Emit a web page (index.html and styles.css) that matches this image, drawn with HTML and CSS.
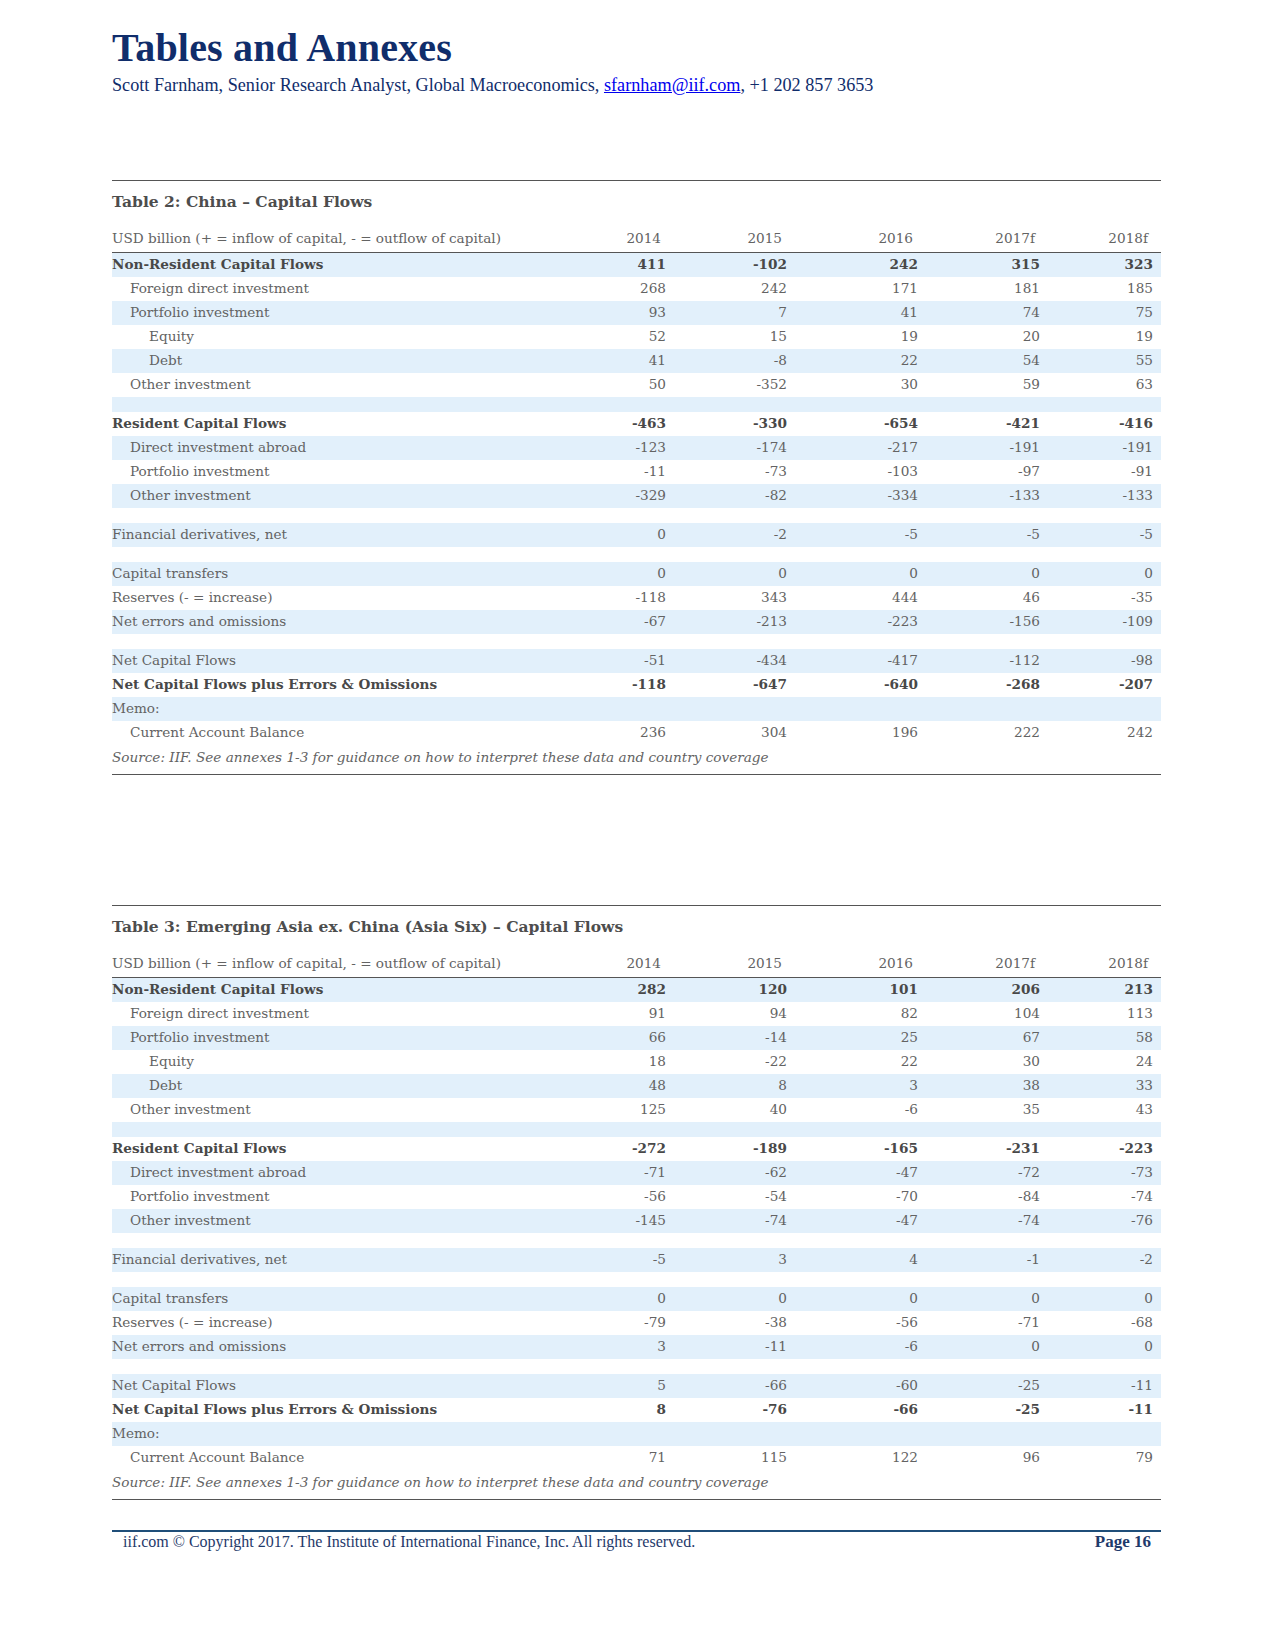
FILE: index.html
```html
<!DOCTYPE html>
<html lang="en">
<head>
<meta charset="utf-8">
<title>Tables and Annexes</title>
<link rel="stylesheet" href="styles.css">
</head>
<body>
<div class="page">
  <header class="page-head">
    <h1 class="page-title">Tables and Annexes</h1>
    <p class="byline">Scott Farnham, Senior Research Analyst, Global Macroeconomics, <a class="mail" href="mailto:sfarnham@iif.com">sfarnham@iif.com</a>, +1 202 857 3653</p>
  </header>

  <section class="block block-first">
    <h2 class="block-title">Table 2: China – Capital Flows</h2>
    <table class="data">
      <colgroup><col class="c-label"><col class="c1"><col class="c2"><col class="c3"><col class="c4"><col class="c5"><col class="c-pad"></colgroup>
      <thead>
        <tr class="head"><th class="lab">USD billion (+ = inflow of capital, - = outflow of capital)</th><th>2014</th><th>2015</th><th>2016</th><th>2017f</th><th>2018f</th><th></th></tr>
      </thead>
      <tbody>
        <tr class="b strong"><td>Non-Resident Capital Flows</td><td>411</td><td>-102</td><td>242</td><td>315</td><td>323</td><td></td></tr>
        <tr class="w"><td class="i1">Foreign direct investment</td><td>268</td><td>242</td><td>171</td><td>181</td><td>185</td><td></td></tr>
        <tr class="b"><td class="i1">Portfolio investment</td><td>93</td><td>7</td><td>41</td><td>74</td><td>75</td><td></td></tr>
        <tr class="w"><td class="i2">Equity</td><td>52</td><td>15</td><td>19</td><td>20</td><td>19</td><td></td></tr>
        <tr class="b"><td class="i2">Debt</td><td>41</td><td>-8</td><td>22</td><td>54</td><td>55</td><td></td></tr>
        <tr class="w"><td class="i1">Other investment</td><td>50</td><td>-352</td><td>30</td><td>59</td><td>63</td><td></td></tr>
        <tr class="b gap"><td colspan="7"></td></tr>
        <tr class="w strong"><td>Resident Capital Flows</td><td>-463</td><td>-330</td><td>-654</td><td>-421</td><td>-416</td><td></td></tr>
        <tr class="b"><td class="i1">Direct investment abroad</td><td>-123</td><td>-174</td><td>-217</td><td>-191</td><td>-191</td><td></td></tr>
        <tr class="w"><td class="i1">Portfolio investment</td><td>-11</td><td>-73</td><td>-103</td><td>-97</td><td>-91</td><td></td></tr>
        <tr class="b"><td class="i1">Other investment</td><td>-329</td><td>-82</td><td>-334</td><td>-133</td><td>-133</td><td></td></tr>
        <tr class="w gap"><td colspan="7"></td></tr>
        <tr class="b"><td>Financial derivatives, net</td><td>0</td><td>-2</td><td>-5</td><td>-5</td><td>-5</td><td></td></tr>
        <tr class="w gap"><td colspan="7"></td></tr>
        <tr class="b"><td>Capital transfers</td><td>0</td><td>0</td><td>0</td><td>0</td><td>0</td><td></td></tr>
        <tr class="w"><td>Reserves (- = increase)</td><td>-118</td><td>343</td><td>444</td><td>46</td><td>-35</td><td></td></tr>
        <tr class="b"><td>Net errors and omissions</td><td>-67</td><td>-213</td><td>-223</td><td>-156</td><td>-109</td><td></td></tr>
        <tr class="w gap"><td colspan="7"></td></tr>
        <tr class="b"><td>Net Capital Flows</td><td>-51</td><td>-434</td><td>-417</td><td>-112</td><td>-98</td><td></td></tr>
        <tr class="w strong"><td>Net Capital Flows plus Errors &amp; Omissions</td><td>-118</td><td>-647</td><td>-640</td><td>-268</td><td>-207</td><td></td></tr>
        <tr class="b"><td>Memo:</td><td></td><td></td><td></td><td></td><td></td><td></td></tr>
        <tr class="w"><td class="i1">Current Account Balance</td><td>236</td><td>304</td><td>196</td><td>222</td><td>242</td><td></td></tr>
      </tbody>
    </table>
    <p class="source">Source: IIF. See annexes 1-3 for guidance on how to interpret these data and country coverage</p>
  </section>

  <section class="block block-second">
    <h2 class="block-title">Table 3: Emerging Asia ex. China (Asia Six) – Capital Flows</h2>
    <table class="data">
      <colgroup><col class="c-label"><col class="c1"><col class="c2"><col class="c3"><col class="c4"><col class="c5"><col class="c-pad"></colgroup>
      <thead>
        <tr class="head"><th class="lab">USD billion (+ = inflow of capital, - = outflow of capital)</th><th>2014</th><th>2015</th><th>2016</th><th>2017f</th><th>2018f</th><th></th></tr>
      </thead>
      <tbody>
        <tr class="b strong"><td>Non-Resident Capital Flows</td><td>282</td><td>120</td><td>101</td><td>206</td><td>213</td><td></td></tr>
        <tr class="w"><td class="i1">Foreign direct investment</td><td>91</td><td>94</td><td>82</td><td>104</td><td>113</td><td></td></tr>
        <tr class="b"><td class="i1">Portfolio investment</td><td>66</td><td>-14</td><td>25</td><td>67</td><td>58</td><td></td></tr>
        <tr class="w"><td class="i2">Equity</td><td>18</td><td>-22</td><td>22</td><td>30</td><td>24</td><td></td></tr>
        <tr class="b"><td class="i2">Debt</td><td>48</td><td>8</td><td>3</td><td>38</td><td>33</td><td></td></tr>
        <tr class="w"><td class="i1">Other investment</td><td>125</td><td>40</td><td>-6</td><td>35</td><td>43</td><td></td></tr>
        <tr class="b gap"><td colspan="7"></td></tr>
        <tr class="w strong"><td>Resident Capital Flows</td><td>-272</td><td>-189</td><td>-165</td><td>-231</td><td>-223</td><td></td></tr>
        <tr class="b"><td class="i1">Direct investment abroad</td><td>-71</td><td>-62</td><td>-47</td><td>-72</td><td>-73</td><td></td></tr>
        <tr class="w"><td class="i1">Portfolio investment</td><td>-56</td><td>-54</td><td>-70</td><td>-84</td><td>-74</td><td></td></tr>
        <tr class="b"><td class="i1">Other investment</td><td>-145</td><td>-74</td><td>-47</td><td>-74</td><td>-76</td><td></td></tr>
        <tr class="w gap"><td colspan="7"></td></tr>
        <tr class="b"><td>Financial derivatives, net</td><td>-5</td><td>3</td><td>4</td><td>-1</td><td>-2</td><td></td></tr>
        <tr class="w gap"><td colspan="7"></td></tr>
        <tr class="b"><td>Capital transfers</td><td>0</td><td>0</td><td>0</td><td>0</td><td>0</td><td></td></tr>
        <tr class="w"><td>Reserves (- = increase)</td><td>-79</td><td>-38</td><td>-56</td><td>-71</td><td>-68</td><td></td></tr>
        <tr class="b"><td>Net errors and omissions</td><td>3</td><td>-11</td><td>-6</td><td>0</td><td>0</td><td></td></tr>
        <tr class="w gap"><td colspan="7"></td></tr>
        <tr class="b"><td>Net Capital Flows</td><td>5</td><td>-66</td><td>-60</td><td>-25</td><td>-11</td><td></td></tr>
        <tr class="w strong"><td>Net Capital Flows plus Errors &amp; Omissions</td><td>8</td><td>-76</td><td>-66</td><td>-25</td><td>-11</td><td></td></tr>
        <tr class="b"><td>Memo:</td><td></td><td></td><td></td><td></td><td></td><td></td></tr>
        <tr class="w"><td class="i1">Current Account Balance</td><td>71</td><td>115</td><td>122</td><td>96</td><td>79</td><td></td></tr>
      </tbody>
    </table>
    <p class="source">Source: IIF. See annexes 1-3 for guidance on how to interpret these data and country coverage</p>
  </section>

  <footer class="page-foot">
    <span class="copy">iif.com © Copyright 2017. The Institute of International Finance, Inc. All rights reserved.</span>
    <span class="pageno">Page 16</span>
  </footer>
</div>
</body>
</html>
```

FILE: styles.css
```css
html, body {
  margin: 0;
  padding: 0;
  background: #ffffff;
}

.page {
  width: 1049px;
  margin-left: 112px;
  padding-top: 26px;
  font-family: "DejaVu Serif", serif;
  color: #636363;
}

.page-title {
  margin: 0;
  font-family: "Liberation Serif", serif;
  font-weight: bold;
  font-size: 40px;
  line-height: 44px;
  color: #102d6b;
  letter-spacing: 0.2px;
}

.byline {
  margin: 4px 0 0 0;
  font-family: "Liberation Serif", serif;
  font-size: 18.2px;
  line-height: 22px;
  color: #102d6b;
}

.mail {
  color: #0000ee;
  text-decoration: underline;
}

.block {
  border-top: 1.5px solid #555;
  border-bottom: 1.5px solid #555;
}

.block-first {
  margin-top: 84px;
}

.block-second {
  margin-top: 130px;
}

.block-title {
  margin: 0;
  padding-top: 11px;
  height: 26px;
  font-size: 15.5px;
  line-height: 20px;
  font-weight: bold;
  color: #4d4d4d;
}

.data {
  width: 100%;
  border-collapse: collapse;
  table-layout: fixed;
  font-size: 13.6px;
}

.c-label { width: 488px; }
.c1 { width: 66px; }
.c2 { width: 121px; }
.c3 { width: 131px; }
.c4 { width: 122px; }
.c5 { width: 113px; }
.c-pad { width: 8px; }

.data th {
  font-weight: normal;
  text-align: right;
  padding: 0 5px 0 0;
  height: 34px;
  vertical-align: bottom;
  line-height: 28px;
  border-bottom: 1.5px solid #555;
  white-space: nowrap;
}

.data th.lab {
  text-align: left;
}

.data td {
  height: 22px;
  padding: 0 0 2px 0;
  text-align: right;
  line-height: 22px;
  white-space: nowrap;
}

.data td:first-child {
  text-align: left;
}

.data td.i1 { padding-left: 18px; }
.data td.i2 { padding-left: 37px; }

.data tr.b td { background: #e2f0fb; }
.data tr.w td { background: #ffffff; }

.data tr.gap td { height: 15px; line-height: 15px; padding: 0; }

.data tr.strong td {
  font-weight: bold;
  color: #484848;
}

.source {
  margin: 0;
  height: 29px;
  line-height: 25px;
  font-style: italic;
  font-size: 13.6px;
  color: #636363;
}

.page-foot {
  margin-top: 30px;
  border-top: 2px solid #1f4e79;
  display: flex;
  justify-content: space-between;
  padding: 0 10px 0 11px;
  font-family: "Liberation Serif", serif;
  color: #1f3a6b;
  font-size: 16px;
  line-height: 19px;
}

.pageno {
  font-weight: bold;
  font-size: 17px;
}
```
